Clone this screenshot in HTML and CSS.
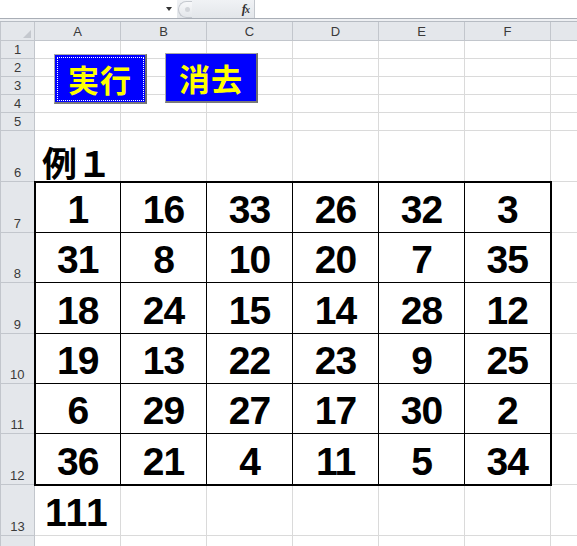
FILE: index.html
```html
<!DOCTYPE html>
<html lang="ja">
<head>
<meta charset="utf-8">
<title>Sheet</title>
<link rel="stylesheet" href="styles.css">
</head>
<body>
<div class="fbar">
  <div class="namebox"><span class="dd"></span></div>
  <div class="fctrl"><span class="knob"><span class="knob-dot"></span></span><span class="fx">f<span class="fx-x">x</span></span></div>
  <div class="finput"></div>
</div>
<div class="band"></div>
<div class="sheet">
  <table class="grid">
    <colgroup>
      <col class="c-rh"><col class="c"><col class="c"><col class="c"><col class="c"><col class="c"><col class="c"><col class="c">
    </colgroup>
    <thead>
      <tr class="hr"><th class="corner"><span class="tri"></span></th><th>A</th><th>B</th><th>C</th><th>D</th><th>E</th><th>F</th><th></th></tr>
    </thead>
    <tbody>
      <tr class="r18"><th>1</th><td></td><td></td><td></td><td></td><td></td><td></td><td></td></tr>
      <tr class="r18"><th>2</th><td></td><td></td><td></td><td></td><td></td><td></td><td></td></tr>
      <tr class="r18"><th>3</th><td></td><td></td><td></td><td></td><td></td><td></td><td></td></tr>
      <tr class="r18"><th>4</th><td></td><td></td><td></td><td></td><td></td><td></td><td></td></tr>
      <tr class="r18"><th>5</th><td></td><td></td><td></td><td></td><td></td><td></td><td></td></tr>
      <tr class="r51"><th>6</th><td class="title">例１</td><td></td><td></td><td></td><td></td><td></td><td></td></tr>
      <tr class="r51"><th>7</th><td class="n tt tl">1</td><td class="n tt">16</td><td class="n tt">33</td><td class="n tt">26</td><td class="n tt">32</td><td class="n tt tr">3</td><td></td></tr>
      <tr class="r50"><th>8</th><td class="n tl">31</td><td class="n">8</td><td class="n">10</td><td class="n">20</td><td class="n">7</td><td class="n tr">35</td><td></td></tr>
      <tr class="r51"><th>9</th><td class="n tl">18</td><td class="n">24</td><td class="n">15</td><td class="n">14</td><td class="n">28</td><td class="n tr">12</td><td></td></tr>
      <tr class="r50"><th>10</th><td class="n tl">19</td><td class="n">13</td><td class="n">22</td><td class="n">23</td><td class="n">9</td><td class="n tr">25</td><td></td></tr>
      <tr class="r50"><th>11</th><td class="n tl">6</td><td class="n">29</td><td class="n">27</td><td class="n">17</td><td class="n">30</td><td class="n tr">2</td><td></td></tr>
      <tr class="r51"><th>12</th><td class="n tb tl">36</td><td class="n tb">21</td><td class="n tb">4</td><td class="n tb">11</td><td class="n tb">5</td><td class="n tb tr">34</td><td></td></tr>
      <tr class="r51"><th>13</th><td class="n plain">111</td><td></td><td></td><td></td><td></td><td></td><td></td></tr>
      <tr class="r51"><th></th><td></td><td></td><td></td><td></td><td></td><td></td><td></td></tr>
    </tbody>
  </table>
  <button class="btn btn-run" type="button">実行</button>
  <button class="btn btn-clear" type="button">消去</button>
</div>
</body>
</html>
```
FILE: styles.css
```css
html, body {
  margin: 0;
  padding: 0;
  background: #ffffff;
  overflow: hidden;
  width: 577px;
  height: 546px;
}
body {
  font-family: "Liberation Sans", Arial, sans-serif;
}
.fbar {
  display: flex;
  height: 18px;
  border-bottom: 1px solid #a9aeb6;
  background: #ffffff;
}
.namebox {
  width: 177px;
  position: relative;
  background: #ffffff;
}
.dd {
  position: absolute;
  left: 166px;
  top: 7px;
  width: 0;
  height: 0;
  border-left: 3px solid transparent;
  border-right: 3px solid transparent;
  border-top: 4px solid #333;
}
.fctrl {
  width: 77px;
  display: flex;
  align-items: center;
  justify-content: space-between;
  background: linear-gradient(#f0f2f5, #e3e6ea);
  border-right: 1px solid #c3c7cd;
}
.knob {
  width: 14px;
  height: 17px;
  margin-left: 1px;
  box-sizing: border-box;
  border: 1px solid #c5c9cf;
  border-right: none;
  border-radius: 9px 0 0 9px;
  background: linear-gradient(#f7f8fa, #e4e7eb);
  display: flex;
  align-items: center;
  justify-content: center;
}
.knob-dot {
  width: 5px;
  height: 5px;
  border-radius: 50%;
  background: #d2d5da;
  margin-left: 3px;
}
.fx {
  font-family: "Liberation Serif", serif;
  font-style: italic;
  font-weight: bold;
  font-size: 13px;
  color: #333;
  margin-right: 5px;
  letter-spacing: -1px;
}
.fx-x {
  font-size: 10px;
}
.finput {
  flex: 1;
  background: #ffffff;
}
.band {
  height: 2px;
  background: #eef0f3;
  border-bottom: 1px solid #b7bcc3;
}
.sheet {
  position: relative;
  height: 524px;
  overflow: hidden;
}
.grid {
  border-collapse: collapse;
  table-layout: fixed;
  width: 636px;
}
.c-rh { width: 34px; }
.c { width: 86px; }
.grid th {
  background: #e4e7eb;
  border: 1px solid #c2c6cc;
  font-weight: normal;
  font-size: 13px;
  color: #3a3a3a;
  padding: 0;
  text-align: center;
}
.grid thead th {
  height: 18px;
  vertical-align: middle;
  border-top: none;
}
.grid tbody th {
  vertical-align: bottom;
  padding-bottom: 1px;
  line-height: 14px;
}
.grid td {
  border: 1px solid #dadada;
  padding: 0;
}
.corner {
  position: relative;
}
.tri {
  position: absolute;
  right: 3px;
  bottom: 2px;
  width: 0;
  height: 0;
  border-left: 8px solid transparent;
  border-bottom: 8px solid #c4c8ce;
}
.r18 { height: 18px; }
.r50 { height: 50px; }
.r51 { height: 51px; }
.title {
  font-family: "Noto Sans CJK JP", sans-serif;
  font-weight: bold;
  font-size: 35px;
  line-height: 35px;
  color: #000;
  vertical-align: bottom;
  white-space: nowrap;
  padding: 0 0 2px 7px !important;
}
.n {
  font-family: "Liberation Sans", Arial, sans-serif;
  font-weight: bold;
  font-size: 39px;
  line-height: 38px;
  letter-spacing: -1px;
  text-align: center;
  vertical-align: bottom;
  color: #000;
  padding: 0 0 3px 0 !important;
}
.grid td.n {
  border-color: #000;
}
.grid td.n.plain {
  border-color: #dadada;
  letter-spacing: 1px;
  text-align: left;
  padding-left: 10px !important;
}
.grid td.tt { border-top: 2px solid #000; }
.grid td.tl { border-left: 2px solid #000; }
.grid td.tr { border-right: 2px solid #000; }
.grid td.tb { border-bottom: 2px solid #000; }
.btn {
  position: absolute;
  width: 93px;
  height: 50px;
  box-sizing: border-box;
  background: #0000ff;
  color: #ffff00;
  font-family: "Noto Sans CJK JP", sans-serif;
  font-weight: bold;
  font-size: 31px;
  line-height: 1;
  padding: 0;
  border-style: solid;
  border-width: 1px 2px 2px 1px;
  border-color: #a8a8a8 #6e6e6e #7a7a7a #a8a8a8;
  letter-spacing: 1px;
}
.btn-run {
  left: 54px;
  top: 32px;
  outline: 1px dotted #ffffff;
  outline-offset: -4px;
}
.btn-clear {
  left: 165px;
  top: 31px;
}
```
